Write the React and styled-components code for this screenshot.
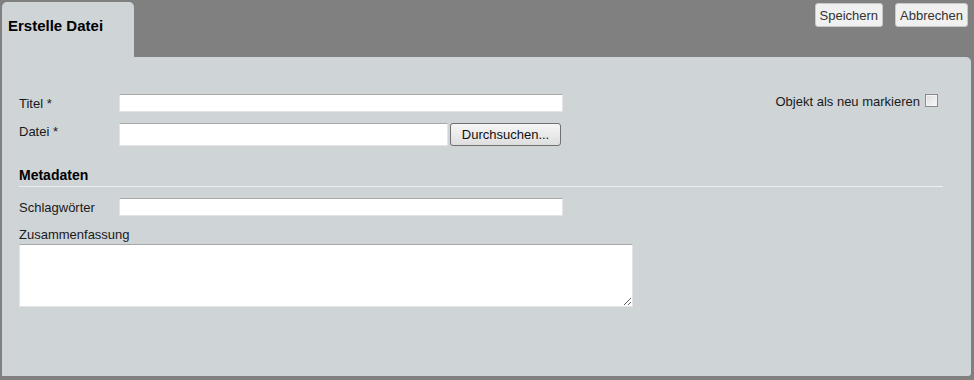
import styled, { createGlobalStyle } from 'styled-components';

const GlobalStyle = createGlobalStyle`
  html, body {
    margin: 0;
    padding: 0;
    background: #808080;
  }
  body {
    font-family: "Liberation Sans", Arial, sans-serif;
    font-size: 13px;
    color: #1a1a1a;
  }
`;

const panelBg = '#cfd4d7';

const Page = styled.div`
  width: 974px;
  height: 380px;
  box-sizing: border-box;
  padding: 2px 3px 4px 2px;
  display: flex;
  flex-direction: column;
`;

const TopBar = styled.div`
  height: 55px;
  display: flex;
  justify-content: space-between;
  align-items: flex-start;
`;

const Tab = styled.div`
  width: 132px;
  height: 55px;
  box-sizing: border-box;
  background: ${panelBg};
  border-radius: 5px 5px 0 0;
  padding: 15px 0 0 6px;
  font-size: 15px;
  font-weight: bold;
  color: #000;
`;

const Actions = styled.div`
  display: flex;
  gap: 12px;
  padding: 1px 3px 0 0;
`;

const TopButton = styled.button`
  height: 24px;
  padding: 0 4px;
  font-family: inherit;
  font-size: 13px;
  color: #333;
  background: #f0f0f0;
  border: 1px solid #c8c8c8;
  border-radius: 3px;
`;

const Panel = styled.div`
  flex: 1;
  background: ${panelBg};
  border-radius: 0 5px 3px 0;
  padding: 37px 33px 0 17px;
  box-sizing: border-box;
`;

const Row = styled.div`
  display: flex;
  align-items: ${(p) => p.$align || 'center'};
  margin-top: ${(p) => p.$mt || 0}px;
  margin-bottom: ${(p) => p.$mb || 0}px;
`;

const Label = styled.label`
  width: 100px;
  flex-shrink: 0;
  padding-top: ${(p) => p.$pt || 0}px;
`;

const TextInput = styled.input`
  width: ${(p) => p.$w}px;
  height: ${(p) => p.$h}px;
  box-sizing: border-box;
  margin: 0;
  padding: 1px 3px;
  font-family: inherit;
  font-size: 13px;
  background: #fff;
  border: 1px solid #e2e4e5;
  border-top-color: #a8a8a8;
  outline: none;
`;

const BrowseButton = styled.button`
  width: 111px;
  height: 23px;
  margin-left: 2px;
  font-family: inherit;
  font-size: 13px;
  color: #111;
  background: linear-gradient(#f6f6f6, #dedede);
  border: 1px solid #707070;
  border-radius: 3px;
`;

const NewFlag = styled.label`
  margin-left: auto;
  display: flex;
  align-items: center;
  gap: 5px;
  align-self: flex-start;
`;

const Box = styled.span`
  width: 11px;
  height: 11px;
  border: 1px solid #8a8a8a;
  background: linear-gradient(135deg, #dcdcdc, #fafafa);
  box-shadow: inset 0 0 0 1px #f4f4f4;
  margin-top: -2px;
`;

const SectionTitle = styled.h3`
  margin: 0 -5px 0 0;
  padding-bottom: 3px;
  font-size: 14px;
  font-weight: bold;
  color: #000;
  border-bottom: 1px solid #eceff0;
`;

const FieldCaption = styled.div`
  line-height: 15px;
`;

const TextArea = styled.textarea`
  display: block;
  width: 614px;
  height: 63px;
  box-sizing: border-box;
  margin: 2px 0 0 0;
  font-family: inherit;
  font-size: 13px;
  border: 1px solid #e2e4e5;
  border-top-color: #a8a8a8;
  outline: none;
  resize: both;
`;

export default function App() {
  return (
    <>
      <GlobalStyle />
      <Page>
        <TopBar>
          <Tab>Erstelle Datei</Tab>
          <Actions>
            <TopButton>Speichern</TopButton>
            <TopButton>Abbrechen</TopButton>
          </Actions>
        </TopBar>
        <Panel>
          <Row $mb={11}>
            <Label>Titel *</Label>
            <TextInput $w={444} $h={18} />
            <NewFlag>
              Objekt als neu markieren
              <Box />
            </NewFlag>
          </Row>
          <Row $align="flex-start" $mb={21}>
            <Label $pt={1}>Datei *</Label>
            <TextInput $w={329} $h={23} />
            <BrowseButton>Durchsuchen...</BrowseButton>
          </Row>
          <SectionTitle>Metadaten</SectionTitle>
          <Row $mt={11} $mb={11}>
            <Label>Schlagwörter</Label>
            <TextInput $w={444} $h={18} />
          </Row>
          <FieldCaption>Zusammenfassung</FieldCaption>
          <TextArea />
        </Panel>
      </Page>
    </>
  );
}
